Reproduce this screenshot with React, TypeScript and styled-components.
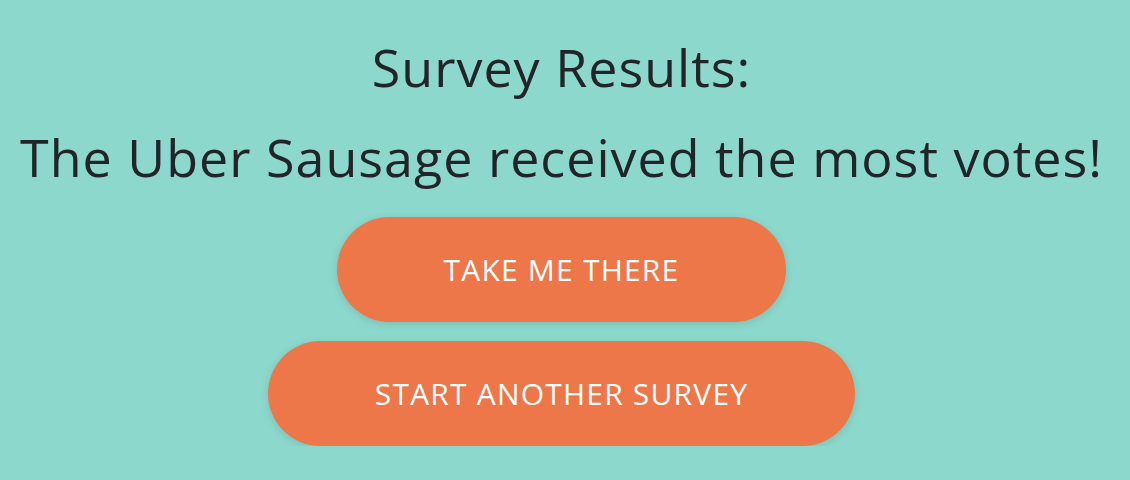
import React from "react";
import styled, { createGlobalStyle } from "styled-components";

const Global = createGlobalStyle`
  html, body { margin: 0; padding: 0; background: #8dd8cc; }
  body { font-family: "Open Sans", sans-serif; color: #212529; }
`;

const Page = styled.main`
  display: flex;
  flex-direction: column;
  align-items: center;
  padding: 28px 7px 0 0;
`;

const Heading = styled.h2`
  margin: 0 0 12px;
  font-family: "Open Sans", sans-serif;
  font-weight: 400;
  font-size: 52px;
  line-height: 1.5;
  letter-spacing: 1px;
  color: #212529;
  text-align: center;
`;

const Actions = styled.div`
  display: flex;
  flex-direction: column;
  align-items: center;
  gap: 19px;
  margin-top: 9px;
`;

const PillButton = styled.button`
  height: 105px;
  padding: 0 107px;
  border: none;
  border-radius: 53px;
  background: #ed7748;
  color: #ffffff;
  font-family: "Open Sans", sans-serif;
  font-size: 30px;
  letter-spacing: 1.2px;
  text-transform: uppercase;
  box-shadow: 0 2px 8px rgba(0, 0, 0, 0.12);
  cursor: pointer;
`;

export default function App() {
  return (
    <>
      <Global />
      <Page>
        <Heading>Survey Results:</Heading>
        <Heading>The Uber Sausage received the most votes!</Heading>
        <Actions>
          <PillButton>Take me there</PillButton>
          <PillButton>Start another survey</PillButton>
        </Actions>
      </Page>
    </>
  );
}
